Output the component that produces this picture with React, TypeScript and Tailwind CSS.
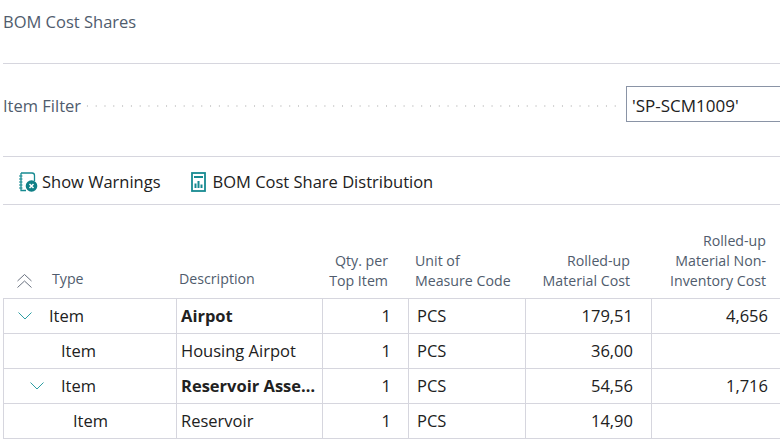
const rows = [
  { indent: 0, chevron: true, bold: true, name: "Airpot", cost: "179,51", non: "4,656" },
  { indent: 1, chevron: false, bold: false, name: "Housing Airpot", cost: "36,00", non: "" },
  { indent: 1, chevron: true, bold: true, name: "Reservoir Assembly", cost: "54,56", non: "1,716" },
  { indent: 2, chevron: false, bold: false, name: "Reservoir", cost: "14,90", non: "" },
];

const cols = "grid grid-cols-[173px_146px_86px_117px_126px_129px]";

function Chevron() {
  return (
    <svg width="14" height="8" viewBox="0 0 14 8" fill="none" className="shrink-0">
      <path d="M0.5 0.5 L7 7 L13.5 0.5" stroke="#2e9ea3" strokeWidth="1" />
    </svg>
  );
}

function WarningIcon() {
  return (
    <svg width="20" height="20" viewBox="0 0 20 20" fill="none">
      <path d="M3 1 H14 Q16.5 1 16.5 3.5 V9 M3 1 V18.5 H8" stroke="#178a91" strokeWidth="1.3" />
      <path d="M1 4 H4.5 M1 7 H4.5 M1 10 H4.5 M1 13 H4.5 M1 16 H4.5" stroke="#178a91" strokeWidth="1" />
      <circle cx="13.5" cy="14" r="5.8" fill="#0f7f86" />
      <path d="M11.5 12 L15.5 16 M15.5 12 L11.5 16" stroke="#ffffff" strokeWidth="1.5" />
    </svg>
  );
}

function ChartIcon() {
  return (
    <svg width="15" height="20" viewBox="0 0 15 20" fill="none">
      <rect x="1" y="1" width="13" height="18" stroke="#178a91" strokeWidth="1.8" />
      <rect x="3" y="4" width="9" height="2" fill="#178a91" />
      <path d="M3.5 16 V11.5 H5.5 V16 Z M6.5 16 V9 H8.5 V16 Z M9.5 16 V12.5 H11.5 V16 Z" fill="#178a91" />
    </svg>
  );
}

export default function App() {
  return (
    <div className="w-[780px] h-[440px] overflow-hidden bg-white pl-[3px] font-['Open_Sans','Noto_Sans',sans-serif] text-[16.5px] text-[#212121]">
      <div className="h-[64px] border-b border-[#d6d6de] pt-[9px] leading-[26px] text-[#505c6d]">BOM Cost Shares</div>

      <div className="flex h-[93px] items-start overflow-hidden border-b border-[#d6d6de] pt-[22px]">
        <span className="mt-[7px] leading-[26px] text-[#505c6d]">Item Filter</span>
        <div className="ml-[2px] mr-[6px] mt-[19px] h-[2px] flex-1 bg-[radial-gradient(circle,#cfcfcf_1px,transparent_1px)] bg-[length:8.8px_2px]" />
        <div className="-mr-[6px] h-[36px] w-[160px] shrink-0 border border-[#8a94a6] pl-[5px] text-[17px] leading-[37px]">'SP-SCM1009'</div>
      </div>

      <div className="flex h-[48px] items-center gap-[30px] border-b border-[#d6d6de] pl-[15px] pt-[3px]">
        <div className="flex items-center gap-[4px]"><WarningIcon /><span>Show Warnings</span></div>
        <div className="flex items-center gap-[7px]"><ChartIcon /><span>BOM Cost Share Distribution</span></div>
      </div>

      <div className={`${cols} mt-[20px] h-[74px] items-end border-b border-[#d6d6de] pb-[7px] text-[14.2px] leading-[20px] text-[#505c6d]`}>
        <div className="mb-[2px] flex items-center pl-[14px]">
          <svg width="15" height="14" viewBox="0 0 15 14" fill="none" className="mt-[3px]">
            <path d="M0.5 7 L7.5 0.5 L14.5 7 M0.5 13.5 L7.5 7 L14.5 13.5" stroke="#69717f" strokeWidth="1" />
          </svg>
          <span className="ml-[20px]">Type</span>
        </div>
        <div className="mb-[2px] pl-[3px]">Description</div>
        <div className="pr-[20px] text-right">Qty. per<br />Top Item</div>
        <div className="pl-[7px]">Unit of<br />Measure Code</div>
        <div className="pr-[21px] text-right">Rolled-up<br />Material Cost</div>
        <div className="pr-[14px] text-right">Rolled-up<br />Material Non-<br />Inventory Cost</div>
      </div>

      {rows.map((r) => (
        <div key={r.name} className={`${cols} h-[35px] border-b border-[#d6d6de] leading-[34px]`}>
          <div className="flex items-center border-l border-[#d6d6de]">
            <div className={`flex items-center ${r.indent === 0 ? "pl-[14px]" : r.indent === 1 ? "pl-[26px]" : "pl-[38px]"}`}>
              {r.chevron ? <Chevron /> : <div className="w-[14px]" />}
              <span className="ml-[17px]">Item</span>
            </div>
          </div>
          <div className={`truncate border-l border-[#d6d6de] pl-[4px] pr-[5px] ${r.bold ? "font-bold" : ""}`}>{r.name}</div>
          <div className="border-l border-[#d6d6de] pr-[17px] text-right">1</div>
          <div className="border-l border-[#d6d6de] pl-[8px]">PCS</div>
          <div className="border-l border-[#d6d6de] pr-[18px] text-right">{r.cost}</div>
          <div className="border-l border-[#d6d6de] pr-[12px] text-right">{r.non}</div>
        </div>
      ))}
    </div>
  );
}
